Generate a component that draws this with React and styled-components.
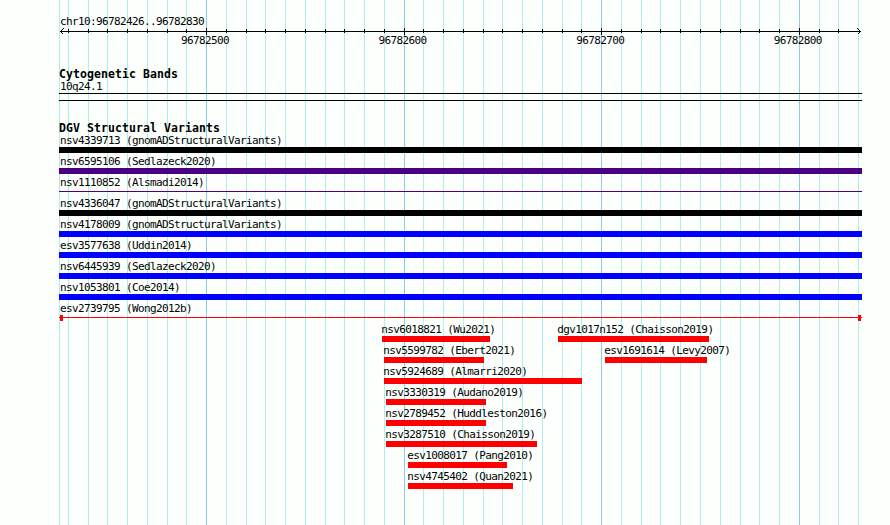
import React from "react";
import styled, { createGlobalStyle } from "styled-components";

const GlobalStyle = createGlobalStyle`
  body {
    margin: 0;
    background: #fcfffc;
  }
`;

const Browser = styled.div`
  position: relative;
  box-sizing: border-box;
  width: 890px;
  height: 525px;
  padding: 15px 28px 0 59px;
  overflow: hidden;
  background: #fcfffc;
  color: #000;
  font: 11px/12px "DejaVu Sans Mono", monospace;
  letter-spacing: -0.62px;
`;

const Grid = styled.svg`
  position: absolute;
  top: 0;
  left: 0;
`;

const Content = styled.div`
  position: relative;
  width: 803px;
`;

const Region = styled.div`
  height: 12px;
  padding-left: 1px;
  line-height: 14px;
`;

const Ruler = styled.svg`
  display: block;
  height: 8px;
`;

const Scale = styled.div`
  display: flex;
  gap: 149.6px;
  height: 12px;
  padding-left: 122px;
`;

const ScaleLabel = styled.span`
  width: 48px;
`;

const Heading = styled.div`
  height: 12px;
  margin-top: ${p => p.$gap}px;
  font-size: 11.5px;
  font-weight: bold;
  letter-spacing: 0.08px;
  line-height: 12px;
`;

const Band = styled.div`
  height: 6px;
  margin-top: 1px;
  border: solid #000;
  border-width: 1px 0;
`;

const Row = styled.div`
  position: relative;
  height: 21px;
`;

const Feature = styled.div`
  position: ${p => (p.$second ? "absolute" : "relative")};
  top: 0;
  left: 0;
  margin-left: ${p => p.$start}px;
  width: ${p => p.$width}px;
  white-space: pre;
`;

const Label = styled.div`
  height: 13px;
  margin-left: ${p => p.$indent}px;
  line-height: 14px;
`;

const Bar = styled.div`
  height: ${p => (p.$thin ? 1 : 6)}px;
  margin-top: ${p => (p.$thin ? 2 : 0)}px;
  background: ${p => p.$color};
`;

const Span = styled.div`
  display: flex;
  align-items: center;
  justify-content: space-between;
  height: 6px;
  padding: 0 1px;
  background: linear-gradient(#f00, #f00) 0 2px / 100% 1px no-repeat;

  &::before,
  &::after {
    content: "";
    width: 3px;
    height: 6px;
    background: #f00;
  }
`;

const majors = [206, 404, 601, 799];
const minors = [
  68, 88, 107, 127, 147, 167, 186, 226, 246, 265, 285, 305, 325, 344, 364, 384,
  423, 443, 463, 483, 502, 522, 542, 562, 581, 621, 641, 660, 680, 700, 720,
  740, 759, 779, 819, 838, 858
];

const variants = [
  [{ name: "nsv4339713 (gnomADStructuralVariants)", color: "#000" }],
  [{ name: "nsv6595106 (Sedlazeck2020)", color: "#4b0082" }],
  [{ name: "nsv1110852 (Alsmadi2014)", color: "#4b0082", thin: true }],
  [{ name: "nsv4336047 (gnomADStructuralVariants)", color: "#000" }],
  [{ name: "nsv4178009 (gnomADStructuralVariants)", color: "#00f" }],
  [{ name: "esv3577638 (Uddin2014)", color: "#00f" }],
  [{ name: "nsv6445939 (Sedlazeck2020)", color: "#00f" }],
  [{ name: "nsv1053801 (Coe2014)", color: "#00f" }],
  [{ name: "esv2739795 (Wong2012b)", color: "#f00", span: true }],
  [
    { name: "nsv6018821 (Wu2021)", start: 323, width: 108 },
    { name: "dgv1017n152 (Chaisson2019)", start: 499, width: 151 }
  ],
  [
    { name: "nsv5599782 (Ebert2021)", start: 325, width: 100 },
    { name: "esv1691614 (Levy2007)", start: 546, width: 102 }
  ],
  [{ name: "nsv5924689 (Almarri2020)", start: 325, width: 198 }],
  [{ name: "nsv3330319 (Audano2019)", start: 327, width: 100 }],
  [{ name: "nsv2789452 (Huddleston2016)", start: 327, width: 100 }],
  [{ name: "nsv3287510 (Chaisson2019)", start: 327, width: 151 }],
  [{ name: "esv1008017 (Pang2010)", start: 349, width: 99 }],
  [{ name: "nsv4745402 (Quan2021)", start: 349, width: 105 }]
];

function GridLines() {
  return (
    <Grid width="890" height="525" shapeRendering="crispEdges">
      {[59, ...minors].map(x => (
        <rect key={x} x={x} width="1" height="525" fill="#afeeee" />
      ))}
      {majors.map(x => (
        <rect key={x} x={x} width="1" height="525" fill="#87ceeb" />
      ))}
    </Grid>
  );
}

function Arrow() {
  return (
    <Ruler width="803" viewBox="59 27 803 8" shapeRendering="crispEdges">
      <rect x="60" y="31" width="801" height="1" />
      {minors.slice(0, -1).map(x => (
        <rect key={x} x={x} y="29" width="1" height="4" />
      ))}
      {majors.map(x => (
        <rect key={x} x={x} y="28" width="1" height="7" />
      ))}
      <path
        d="M63.5 28.5 60.5 31.5 63.5 34.5M857.5 28.5 860.5 31.5 857.5 34.5"
        fill="none"
        stroke="#000"
      />
    </Ruler>
  );
}

function Variant({ item, second }) {
  const { name, color = "#f00", start = 0, width = 803, thin, span } = item;
  return (
    <Feature $start={start} $width={width} $second={second}>
      <Label $indent={start ? -0.7 : 1}>{name}</Label>
      {span ? <Span /> : <Bar $color={color} $thin={thin} />}
    </Feature>
  );
}

function App() {
  return (
    <Browser>
      <GlobalStyle />
      <GridLines />
      <Content>
        <Region>chr10:96782426..96782830</Region>
        <Arrow />
        <Scale>
          {majors.map((x, i) => (
            <ScaleLabel key={x}>{96782500 + i * 100}</ScaleLabel>
          ))}
        </Scale>
        <Heading $gap={21}>Cytogenetic Bands</Heading>
        <Region>10q24.1</Region>
        <Band />
        <Heading $gap={21}>DGV Structural Variants</Heading>
        {variants.map(row => (
          <Row key={row[0].name}>
            {row.map((item, i) => (
              <Variant key={item.name} item={item} second={i > 0} />
            ))}
          </Row>
        ))}
      </Content>
    </Browser>
  );
}

export default App;
